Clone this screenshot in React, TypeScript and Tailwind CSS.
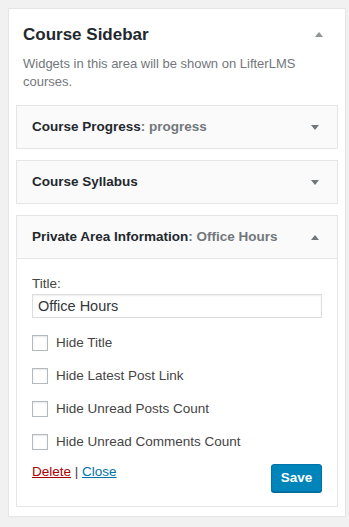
import React, { useState } from "react";

const font = { fontFamily: '"Liberation Sans", Arial, sans-serif' };

function Arrow({ up, light }: { up?: boolean; light?: boolean }) {
  const fill = light ? "#8f9498" : "#72777c";
  return (
    <svg width="8" height="5" viewBox="0 0 8 5" className="shrink-0">
      {up ? <path d="M0 5 L4 0 L8 5 Z" fill={fill} /> : <path d="M0 0 L4 5 L8 0 Z" fill={fill} />}
    </svg>
  );
}

function WidgetHeader({ title, sub, open }: { title: string; sub?: string; open?: boolean }) {
  return (
    <div className="flex h-[42px] items-center justify-between pl-[15px] pr-[18px] bg-[#fafafa]">
      <span className="text-[13.5px] font-semibold text-[#23282d]">
        {title}
        {sub && <span className="text-[#72777c]">: {sub}</span>}
      </span>
      <Arrow up={open} />
    </div>
  );
}

const options = ["Hide Title", "Hide Latest Post Link", "Hide Unread Posts Count", "Hide Unread Comments Count"];

export default function App() {
  const [title, setTitle] = useState("Office Hours");
  const [checked, setChecked] = useState<Record<string, boolean>>({});

  return (
    <div className="min-h-[527px] bg-[#f1f1f1] pt-2 pl-2 pr-[3px]" style={font}>
      <div className="bg-white border border-[#e5e5e5] pt-[14px] pb-[9px]">
        <div className="flex items-start justify-between pl-[14px] pr-[22px]">
          <h2 className="text-[17px] font-semibold text-[#23282d] leading-[24px]">Course Sidebar</h2>
          <div className="pt-[9px]"><Arrow up light /></div>
        </div>
        <p className="pl-[14px] pr-4 mt-[8px] text-[13px] leading-[18px] text-[#72777c]">
          Widgets in this area will be shown on LifterLMS courses.
        </p>

        <div className="mt-[14px] mx-[7px] flex flex-col gap-[11px]">
          <div className="border border-[#e5e5e5]">
            <WidgetHeader title="Course Progress" sub="progress" />
          </div>
          <div className="border border-[#e5e5e5]">
            <WidgetHeader title="Course Syllabus" />
          </div>
          <div className="border border-[#e5e5e5]">
            <WidgetHeader title="Private Area Information" sub="Office Hours" open />
            <div className="border-t border-[#e5e5e5] px-[15px] pt-[17px] pb-[14px]">
              <label className="block text-[13.5px] text-[#444] leading-[16px]">Title:</label>
              <input
                className="mt-[2px] block w-full h-[24px] border border-[#ddd] px-[5px] text-[14.5px] text-[#32373c] outline-none shadow-[inset_0_1px_2px_rgba(0,0,0,0.07)]"
                value={title}
                onChange={(e) => setTitle(e.target.value)}
              />
              <div className="mt-[17px] flex flex-col gap-[17px]">
                {options.map((o) => (
                  <label key={o} className="flex items-center gap-[8px] text-[13.5px] text-[#444] leading-[16px] cursor-pointer">
                    <input
                      type="checkbox"
                      className="appearance-none w-[16px] h-[16px] border border-[#b4b9be] bg-white shadow-[inset_0_1px_2px_rgba(0,0,0,0.1)] checked:bg-[#0085ba]"
                      checked={!!checked[o]}
                      onChange={(e) => setChecked({ ...checked, [o]: e.target.checked })}
                    />
                    {o}
                  </label>
                ))}
              </div>
              <div className="mt-[13px] flex items-start justify-between">
                <div className="text-[13.5px] leading-[18px] text-[#444]">
                  <a href="#" className="text-[#a00] underline">Delete</a>
                  {" | "}
                  <a href="#" className="text-[#0073aa] underline">Close</a>
                </div>
                <button className="mt-[1px] h-[28px] w-[51px] rounded-[3px] bg-[#0085ba] border border-[#0073aa] text-white text-[13.5px] font-semibold shadow-[0_1px_0_#006799]">
                  Save
                </button>
              </div>
            </div>
          </div>
        </div>
      </div>
    </div>
  );
}
